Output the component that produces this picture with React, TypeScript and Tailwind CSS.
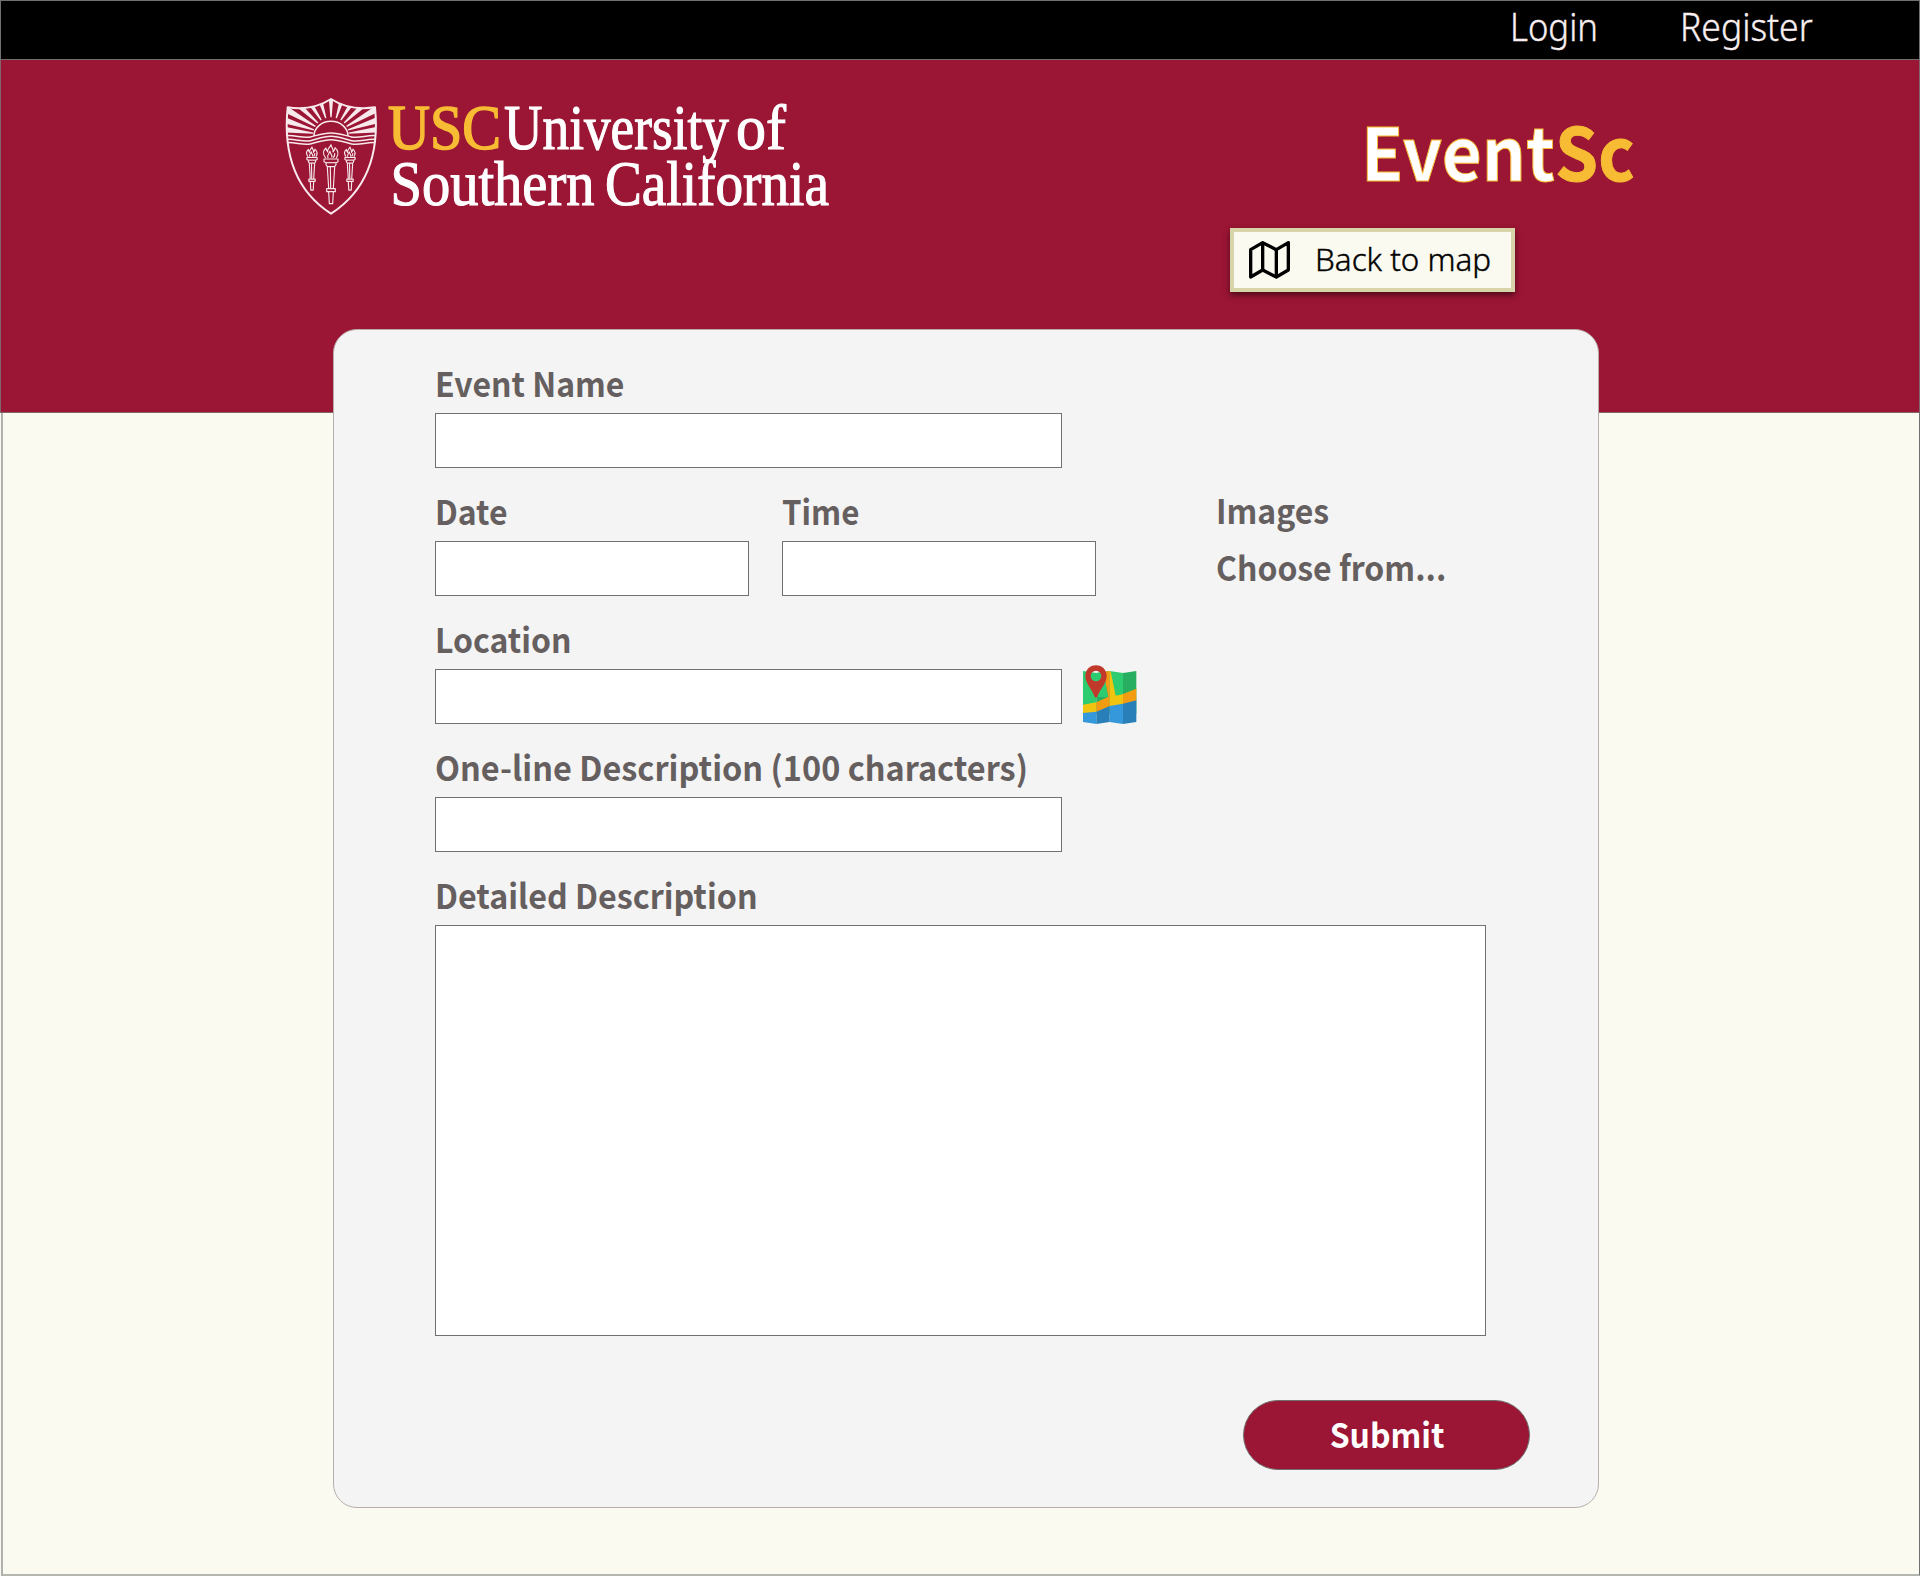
const SANS = "font-['Noto_Sans_CJK_SC','Noto_Sans',sans-serif]";
const LIGHT = "font-['Noto_Sans',sans-serif] font-light [-webkit-text-stroke:0.4px_currentColor]";

function Label({ text, scale = 'scale-x-94' }: { text: string; scale?: string }) {
  return (
    <span className={`block h-10 w-fit origin-left whitespace-nowrap text-[34px] leading-[43px] font-bold text-[#665f5f] ${scale}`}>
      {text}
    </span>
  );
}

function Field({ label, scale, width, height = 'h-[55px]' }: { label: string; scale?: string; width: string; height?: string }) {
  return (
    <label className="flex flex-col gap-3">
      <Label text={label} scale={scale} />
      <textarea className={`block resize-none border border-[#707070] bg-white outline-none ${width} ${height}`} />
    </label>
  );
}

function Torch({ x, y, s }: { x: number; y: number; s: number }) {
  return (
    <g transform={`translate(${x} ${y}) scale(${s})`} fill="none" stroke="#f7e9ec" strokeWidth={3.4 / s} strokeLinejoin="round">
      <path d="M-16 40C-26 27-22 16-15 10C-15 18-11 18-10 22C-12 12-4 10 0 0C1 10 9 12 6 22C10 18 12 14 12 9C22 18 24 28 16 40" />
      <path d="M-9 40C-13 31-6 27-3 20C-2 30 4 28 3 39M7 39C11 34 12 30 11 25" />
      <path d="M-21 43H21V51L15 54V60L11 66H-11L-15 60V54L-21 51Z" />
      <path d="M-15 54H15" />
      <path d="M-11 67L-7 131M11 67L7 131M-2 67L-1 131" />
      <path d="M-13 132H13V141H-13Z" />
      <path d="M-7 142L-5 177H5L7 142" />
    </g>
  );
}

function Logo() {
  const rays = [-83, -72, -60, -47, -33, -17, 0, 17, 33, 47, 60, 72, 83];
  const shield = 'M38 52C86 59 128 53 168 27C208 53 250 59 300 52C314 190 274 302 168 371C62 302 24 190 38 52Z';
  return (
    <svg className="block" width="570" height="130" viewBox="0 0 570 130" role="img" aria-label="USC University of Southern California">
      <g transform="scale(0.33333)">
        <clipPath id="shield">
          <path d={shield} />
        </clipPath>
        <g clipPath="url(#shield)" fill="#f7e9ec">
          {rays.map((a) => (
            <path key={a} transform={`rotate(${a} 168 136)`} d="M166 82L158 -20H178L170 82Z" />
          ))}
          <path d="M30 131C60 138 80 146 105 137C130 127 145 124 168 132C195 124 210 128 232 137C255 146 280 138 310 131V180H30Z" fill="#9b1534" />
          <g fill="none" stroke="#f7e9ec" strokeWidth="4.5">
            <path d="M117 138A51 44 0 0 1 219 138" />
            <path d="M36 137C60 135 85 146 106 141C130 135 145 129 168 129C191 129 206 135 230 141C251 146 276 135 300 137" />
            <path d="M36 148C60 146 85 157 106 152C130 146 145 139 168 139C191 139 206 146 230 152C251 157 276 146 300 148" />
            <path d="M36 158C60 156 85 167 106 162C130 156 145 149 168 149C191 149 206 156 230 162C251 167 276 156 300 158" />
          </g>
        </g>
        <path d={shield} fill="none" stroke="#f7e9ec" strokeWidth="6" strokeLinejoin="round" />
        <Torch x={111} y={171} s={0.73} />
        <Torch x={168} y={164} s={1} />
        <Torch x={225} y={171} s={0.73} />
      </g>
      <g fontFamily="'Liberation Serif', serif" fontSize="62.5" fill="#fff" stroke="#fff" strokeWidth="1.1">
        <text x="113" y="58.7" textLength="113" lengthAdjust="spacingAndGlyphs" fill="#f7bc33" stroke="#f7bc33" strokeWidth="1.6">USC</text>
        <text x="229" y="58.7" textLength="225" lengthAdjust="spacingAndGlyphs">University</text>
        <text x="461" y="58.7" textLength="50" lengthAdjust="spacingAndGlyphs">of</text>
        <text x="115.5" y="114.7" textLength="204" lengthAdjust="spacingAndGlyphs">Southern</text>
        <text x="330" y="114.7" textLength="224" lengthAdjust="spacingAndGlyphs">California</text>
      </g>
    </svg>
  );
}

function MapOutline() {
  return (
    <svg className="block" width="42" height="38" viewBox="117 95 126 114" fill="none" stroke="#000" strokeWidth="10" strokeLinejoin="round">
      <path d="M122 121L158 100L199 121L235 100V182L199 203L158 182L122 203Z" />
      <path d="M158 100V182M199 121V203" />
    </svg>
  );
}

function MapColor() {
  return (
    <svg className="block" width="54" height="60" viewBox="70 44 162 180">
      <path d="M70 62L110 68V190H70ZM150 62L190 68V190H150Z" fill="#2ecc71" />
      <path d="M110 68L150 62V190H110ZM190 68L230 62V190H190Z" fill="#27ae60" />
      <path d="M110 68L133 65L145 140H110Z" fill="#2ecc71" />
      <path d="M70 186L110 182V221L70 215ZM150 165L190 158V221L150 215Z" fill="#3498db" />
      <path d="M110 182L150 165V215L110 221ZM190 158L230 148V215L190 221Z" fill="#2980b9" />
      <path d="M70 163L110 156V184L70 188ZM150 62L153 63L168 136L190 131V160L150 167Z" fill="#f1c40f" />
      <path d="M110 156L146 139L131 65L150 62V167L110 184ZM190 131L230 115V150L190 160Z" fill="#f39c12" />
      <path fillRule="evenodd" fill="#c0392b" d="M109 45C128 45 141 59 141 77C141 99 121 116 113 139Q109 144 105 139C97 116 77 99 77 77C77 59 90 45 109 45ZM109 61A16 16 0 1 0 109 93A16 16 0 1 0 109 61Z" />
    </svg>
  );
}

export default function App() {
  return (
    <div className={`flex h-[1576px] w-[1920px] flex-col bg-[#fafaf0] ${SANS}`}>
      <nav className={`flex h-[60px] shrink-0 items-start justify-end border border-[#707070] bg-black pr-[106px] text-[39px] leading-[49px] text-[#f9eff0] ${LIGHT}`}>
        <a className="mr-[80px] block w-[90px] origin-left scale-x-[0.89]">Login</a>
        <a className="block w-[133px] origin-left scale-x-[0.91]">Register</a>
      </nav>
      <header className="flex h-[353px] shrink-0 justify-between border-x border-b border-[#84646c] bg-[#9b1534] pt-[30px] pl-[274px]">
        <Logo />
        <div className="flex w-[689px] flex-col pt-[17px]">
          <h1 className="ml-[131px] h-[84px] w-fit origin-left scale-x-[0.945] text-[73px] leading-[84px] font-bold whitespace-nowrap">
            <span className="text-white [-webkit-text-stroke:1px_#f7bc33]">Event</span>
            <span className="text-[#f7bc33] [-webkit-text-stroke:1px_#f7bc33]">Sc</span>
          </h1>
          <button className="mt-[37px] flex h-[64px] w-[285px] items-center border-4 border-[#d6d4a8] bg-[#fafaf0] pl-[15px] shadow-[0_3px_6px_rgba(0,0,0,0.5)]">
            <MapOutline />
            <span className={`ml-[24px] origin-left scale-x-[0.98] pb-[2px] text-[32px] leading-[46px] whitespace-nowrap text-black ${LIGHT}`}>Back to map</span>
          </button>
        </div>
      </header>
      <div className="ml-px flex-1 border-r border-b-2 border-l-2 border-r-[#707070] border-b-[#b4b6b0] border-l-[#b0b0b0]">
        <main className="-mt-[84px] ml-[330px] flex h-[1179px] w-[1266px] flex-col gap-[21px] rounded-3xl border border-[#b9aeae] bg-[#f4f4f4] pt-[31px] pl-[101px]">
          <Field label="Event Name" width="w-[627px]" />
          <div className="flex">
            <Field label="Date" width="w-[314px]" />
            <div className="ml-[33px]">
              <Field label="Time" scale="scale-x-92" width="w-[314px]" />
            </div>
            <div className="-mt-px ml-[120px] flex flex-col gap-[17px]">
              <Label text="Images" />
              <Label text="Choose from..." />
            </div>
          </div>
          <div className="flex items-end">
            <Field label="Location" width="w-[627px]" />
            <div className="-mb-px ml-[21px] h-[60px]">
              <MapColor />
            </div>
          </div>
          <Field label="One-line Description (100 characters)" scale="scale-x-[0.955]" width="w-[627px]" />
          <Field label="Detailed Description" scale="scale-x-[0.948]" width="w-[1051px]" height="h-[411px]" />
          <button className="mt-[43px] ml-[808px] flex h-[70px] w-[287px] shrink-0 items-center justify-center rounded-full border border-[#707070] bg-[#9b1534] pb-[2px] pl-[2px] text-[34px] leading-10 font-bold text-white">
            <span className="scale-x-94">Submit</span>
          </button>
        </main>
      </div>
    </div>
  );
}
